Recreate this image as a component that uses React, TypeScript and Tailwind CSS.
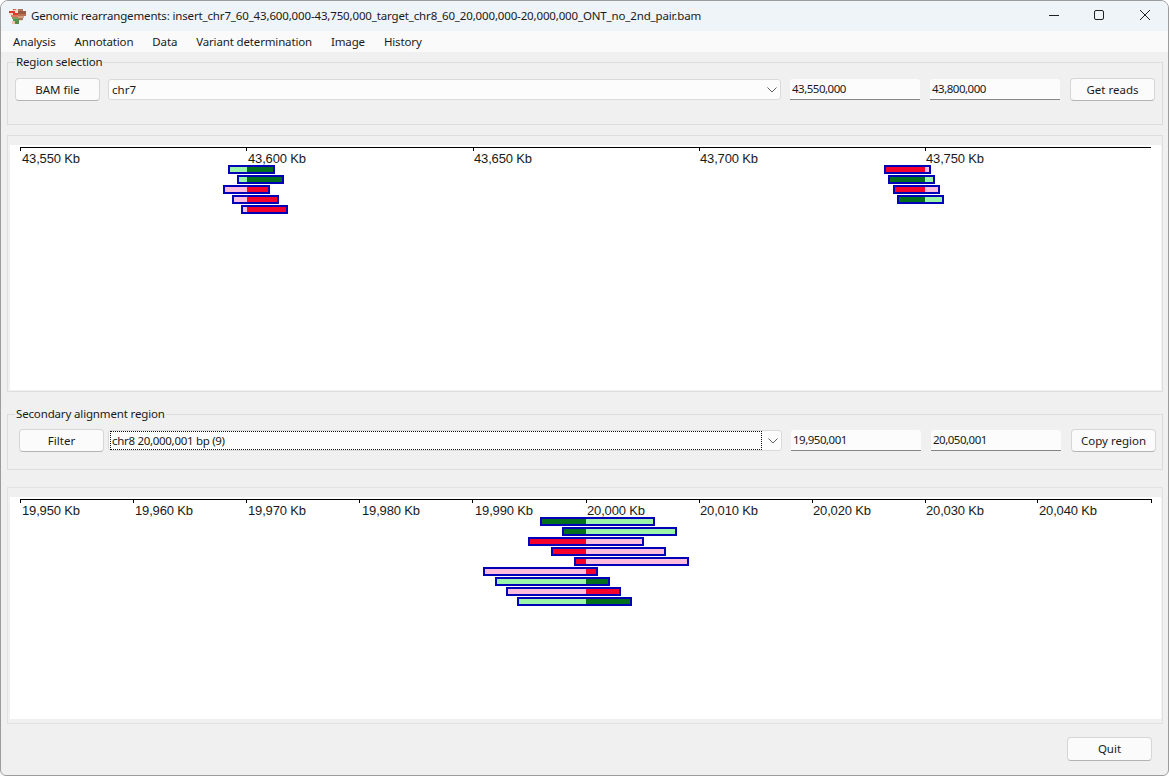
import React from "react";

const FONT = "font-['Noto_Sans','Open_Sans',sans-serif]";
const DG = "#006f1c";
const LG = "#9bf5a8";
const RD = "#f5002d";
const PK = "#fdbcdc";
const BL = "#0000b8";

type R = [number, number, number, number, string, string];

const topReads: R[] = [
  [228, 275, 165, 247, LG, DG],
  [237, 284, 175, 247, LG, DG],
  [223, 270, 185, 247, PK, RD],
  [232, 279, 195, 247, PK, RD],
  [241, 288, 205, 247, PK, RD],
  [884, 931, 165, 925, RD, PK],
  [888, 935, 175, 925, DG, LG],
  [893, 940, 185, 925, RD, PK],
  [897, 944, 195, 925, DG, LG],
];

const bottomReads: R[] = [
  [540, 655, 517, 586, DG, LG],
  [562, 677, 527, 586, DG, LG],
  [528, 644, 537, 586, RD, PK],
  [551, 666, 547, 586, RD, PK],
  [574, 689, 557, 586, RD, PK],
  [483, 598, 567, 586, PK, RD],
  [495, 610, 577, 586, LG, DG],
  [506, 621, 587, 586, PK, RD],
  [517, 632, 597, 586, LG, DG],
];

function Read({ r }: { r: R }) {
  const [x1, x2, y, s, a, b] = r;
  return (
    <g shapeRendering="crispEdges">
      <rect x={x1} y={y} width={x2 - x1} height={9} fill={BL} />
      <rect x={x1 + 2} y={y + 2} width={s - x1 - 2} height={5} fill={a} />
      <rect x={s} y={y + 2} width={x2 - s - 2} height={5} fill={b} />
    </g>
  );
}

function Chart({
  top,
  height,
  axisY,
  ticks,
  labels,
  reads,
}: {
  top: number;
  height: number;
  axisY: number;
  ticks: number[];
  labels: [number, string][];
  reads: R[];
}) {
  return (
    <svg
      className="block bg-white"
      width={1151}
      height={height}
      viewBox={`10 ${top} 1151 ${height}`}
    >
      <g shapeRendering="crispEdges">
        <rect x={20} y={axisY} width={1131} height={1} fill="#000" />
        {ticks.map((t) => (
          <rect key={t} x={t} y={axisY} width={1} height={4} fill="#000" />
        ))}
      </g>
      {labels.map(([x, s]) => (
        <text
          key={s}
          x={x}
          y={axisY + 16}
          fontFamily="'Liberation Sans', Arial, sans-serif"
          fontSize={13}
          letterSpacing={-0.15}
          fill="#1a1a1a"
        >
          {s}
        </text>
      ))}
      {reads.map((r, i) => (
        <Read key={i} r={r} />
      ))}
    </svg>
  );
}

function Btn({ label, className = "" }: { label: string; className?: string }) {
  return (
    <button
      className={`h-[23px] w-[85px] shrink-0 rounded-[4px] border border-[#d6d6d6] border-b-[#b4b4b4] bg-[#fbfbfb] text-[11.5px] leading-[20px] text-[#1a1a1a] ${className}`}
    >
      {label}
    </button>
  );
}

function Chevron() {
  return (
    <svg width="10" height="6" viewBox="0 0 10 6" fill="none" className="shrink-0">
      <path d="M0.5 0.5 L5 5 L9.5 0.5" stroke="#606060" strokeWidth="1" />
    </svg>
  );
}

function Field({ value }: { value: string }) {
  return (
    <div className="h-[21px] w-[130px] shrink-0 rounded-t-[3px] border-b border-b-[#868686] bg-[#fcfcfc] pl-[2px] text-[11.5px] leading-[19px] tracking-[-0.5px] text-[#1a1a1a]">
      {value}
    </div>
  );
}

function Group({
  title,
  className,
  children,
}: {
  title: string;
  className: string;
  children: React.ReactNode;
}) {
  return (
    <fieldset className={`min-w-0 border border-[#dcdcdc] ${className}`}>
      <legend className="px-[1px] text-[11.5px] leading-[16px] tracking-[-0.15px] text-[#1a1a1a]">{title}</legend>
      {children}
    </fieldset>
  );
}

function AppIcon() {
  return (
    <svg width="17" height="15" viewBox="0 0 17 15" shapeRendering="crispEdges" className="shrink-0">
      <rect x="3" y="0" width="10" height="2" fill="#f0d8c8" />
      <rect x="4" y="0" width="3" height="1" fill="#e85a50" />
      <rect x="9" y="0" width="5" height="2" fill="#b07a5a" />
      <rect x="0" y="2" width="6" height="2" fill="#e8332e" />
      <rect x="6" y="2" width="3" height="2" fill="#f3e2d6" />
      <rect x="9" y="2" width="8" height="3" fill="#9a5a40" />
      <rect x="0" y="4" width="4" height="2" fill="#f3d9c8" />
      <rect x="4" y="4" width="5" height="2" fill="#d8402e" />
      <rect x="9" y="5" width="8" height="2" fill="#b87050" />
      <rect x="2" y="6" width="7" height="2" fill="#e87060" />
      <rect x="9" y="7" width="6" height="2" fill="#d0a080" />
      <rect x="3" y="8" width="6" height="2" fill="#8a9a60" />
      <rect x="9" y="9" width="5" height="2" fill="#a87858" />
      <rect x="4" y="10" width="6" height="2" fill="#4e9a50" />
      <rect x="10" y="11" width="3" height="1" fill="#e8d8b8" />
      <rect x="3" y="12" width="3" height="3" fill="#e8c8a8" />
      <rect x="6" y="12" width="4" height="3" fill="#5a8a4a" />
    </svg>
  );
}

export default function App() {
  const menus = ["Analysis", "Annotation", "Data", "Variant determination", "Image", "History"];
  const ticksB = [20, 133, 246, 359, 472, 586, 699, 812, 925, 1037, 1151];
  return (
    <div className={`h-[776px] w-[1169px] overflow-hidden bg-white ${FONT}`}>
      <div className="flex h-full flex-col overflow-hidden rounded-t-[8px] rounded-b-[6px] border border-[#9c9c9c] bg-[#f0f0f0]">
        <div className="flex h-[30px] shrink-0 items-center bg-[#eef4f8] pl-[8px]">
          <AppIcon />
          <span className="ml-[5px] flex-1 text-[11.5px] tracking-[-0.15px] whitespace-nowrap text-[#1a1a1a]">
            Genomic rearrangements: insert_chr7_60_43,600,000-43,750,000_target_chr8_60_20,000,000-20,000,000_ONT_no_2nd_pair.bam
          </span>
          <svg width="120" height="30" viewBox="0 0 120 30" fill="none" stroke="#202020" strokeWidth="1" className="shrink-0">
            <path d="M1 14.5 H11" />
            <rect x="46.5" y="9.5" width="9" height="9" rx="1.5" />
            <path d="M92 9 L102 19 M102 9 L92 19" />
          </svg>
        </div>
        <div className="flex h-[21px] shrink-0 items-center gap-[19px] bg-[#fafafa] pl-[12px] text-[11.5px] tracking-[-0.15px] text-[#1a1a1a]">
          {menus.map((m) => (
            <span key={m}>{m}</span>
          ))}
        </div>

        <div className="flex flex-1 flex-col px-[6px]">
          <Group title="Region selection" className="mt-[2px] h-[71px] w-[1156px] shrink-0 px-[7px]">
            <div className="mt-[8px] flex items-center">
              <Btn label="BAM file" />
              <div className="ml-[8px] flex h-[21px] w-[673px] items-center justify-between rounded-[3px] border border-[#dadada] bg-[#fcfcfc] pr-[3px] pl-[3px] text-[11.5px] text-[#1a1a1a]">
                <span>chr7</span>
                <Chevron />
              </div>
              <div className="ml-[9px]"><Field value="43,550,000" /></div>
              <div className="ml-[10px]"><Field value="43,800,000" /></div>
              <Btn label="Get reads" className="ml-[10px]" />
            </div>
          </Group>

          <div className="mt-[10px] h-[257px] w-[1156px] shrink-0 border border-[#dedede] px-[2px] pt-[9px]">
            <Chart
              top={145}
              height={245}
              axisY={147}
              ticks={[20, 246, 473, 699, 925]}
              labels={[
                [22, "43,550 Kb"],
                [248, "43,600 Kb"],
                [474, "43,650 Kb"],
                [700, "43,700 Kb"],
                [926, "43,750 Kb"],
              ]}
              reads={topReads}
            />
          </div>

          <Group title="Secondary alignment region" className="mt-[14px] h-[64px] w-[1156px] shrink-0 pr-[3px] pl-[7px]">
            <div className="mt-[7px] ml-[4px] flex items-center">
              <Btn label="Filter" />
              <div className="ml-[4px] flex h-[21px] w-[674px] shrink-0 items-center justify-between rounded-[3px] border border-[#dadada] bg-[#fcfcfc] pr-[3px] pl-[1px] text-[11.5px] text-[#1a1a1a]">
                <span className="flex h-[19px] w-[652px] items-center border border-dotted border-[#111] pl-[1px] tracking-[-0.3px]">
                  chr8 20,000,001 bp (9)
                </span>
                <Chevron />
              </div>
              <div className="ml-[9px]"><Field value="19,950,001" /></div>
              <div className="ml-[10px]"><Field value="20,050,001" /></div>
              <Btn label="Copy region" className="ml-[10px]" />
            </div>
          </Group>

          <div className="mt-[17px] h-[237px] w-[1156px] shrink-0 border border-[#e2e2e2] px-[2px] pt-[9px]">
            <Chart
              top={497}
              height={222}
              axisY={499}
              ticks={ticksB}
              labels={[
                [22, "19,950 Kb"],
                [135, "19,960 Kb"],
                [248, "19,970 Kb"],
                [362, "19,980 Kb"],
                [475, "19,990 Kb"],
                [587, "20,000 Kb"],
                [700, "20,010 Kb"],
                [813, "20,020 Kb"],
                [926, "20,030 Kb"],
                [1039, "20,040 Kb"],
              ]}
              reads={bottomReads}
            />
          </div>

          <div className="mt-[13px] flex w-[1145px] justify-end">
            <Btn label="Quit" className="h-[24px]" />
          </div>
        </div>
      </div>
    </div>
  );
}
